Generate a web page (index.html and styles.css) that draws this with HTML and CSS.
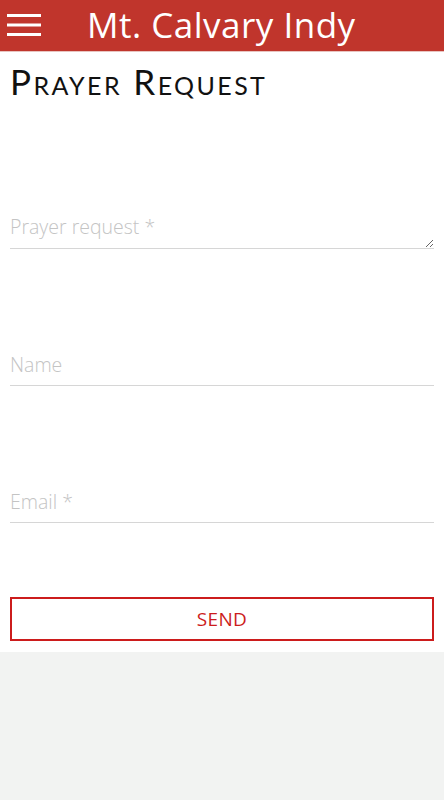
FILE: index.html
```html
<!DOCTYPE html>
<html lang="en">
<head>
<meta charset="utf-8">
<title>Prayer Request - Mt. Calvary Indy</title>
<link rel="stylesheet" href="styles.css">
</head>
<body>
<header class="topbar">
  <button class="menu-btn" aria-label="Menu">
    <svg width="34" height="22" viewBox="0 0 34 22"><rect x="0" y="0" width="34" height="3" fill="#fff"/><rect x="0" y="9.5" width="34" height="3" fill="#fff"/><rect x="0" y="19" width="34" height="3" fill="#fff"/></svg>
  </button>
  <h1 class="brand">Mt. Calvary Indy</h1>
</header>
<main class="page">
  <h2 class="page-title">Prayer Request</h2>
  <form class="form">
    <div class="field field-request"><textarea class="input textarea" placeholder="Prayer request *" rows="1"></textarea></div>
    <div class="field"><input class="input" type="text" placeholder="Name"></div>
    <div class="field"><input class="input" type="email" placeholder="Email *"></div>
    <button type="button" class="send">SEND</button>
  </form>
</main>
</body>
</html>
```
FILE: styles.css
```css
html, body { margin: 0; padding: 0; }
body { background: #f2f3f2; font-family: "Open Sans", "Liberation Sans", sans-serif; }
.topbar {
  height: 52px;
  background: #c0352c;
  display: flex;
  align-items: center;
  box-sizing: border-box;
  border-bottom: 1px solid #e8c4c0;
}
.menu-btn {
  background: none; border: 0; padding: 0;
  margin-left: 7px; width: 34px; height: 22px;
  display: flex; margin-top: -2px;
}
.brand {
  margin: -2px 0 0 46px;
  color: #fff;
  font-family: "Open Sans", sans-serif;
  font-weight: 400;
  font-size: 35px;
  letter-spacing: 0.5px;
  line-height: 1;
}
.page { background: #fff; padding: 9px 10px 11px 10px; }
.page-title {
  margin: 0;
  font-family: "Lato", sans-serif;
  font-variant: small-caps;
  font-weight: 400;
  font-size: 35px;
  letter-spacing: 2.4px;
  color: #111;
  line-height: 40px;
}
.form { display: flex; flex-direction: column; }
.field { border-bottom: 1.5px solid #d6d6d6; position: relative; }
.field-request { margin-top: 114px; }
.field + .field { margin-top: 104px; }
.input {
  display: block; width: 100%; box-sizing: border-box;
  border: 0; outline: none; background: transparent;
  font-family: "Open Sans", sans-serif; font-size: 19.5px; font-weight: 300;
  padding: 0 0 10px 0; height: 32px; color: #333;
}
.input::placeholder { color: #c4c4c4; }
.textarea { resize: vertical; height: 33px; padding: 0; line-height: 24px; overflow: hidden; }
.send {
  margin-top: 74px;
  height: 44px;
  border: 2px solid #cc1c1c;
  background: #fff;
  color: #cc1c1c;
  font-family: "Open Sans", sans-serif;
  font-size: 19px;
  letter-spacing: 0.3px;
}
```
